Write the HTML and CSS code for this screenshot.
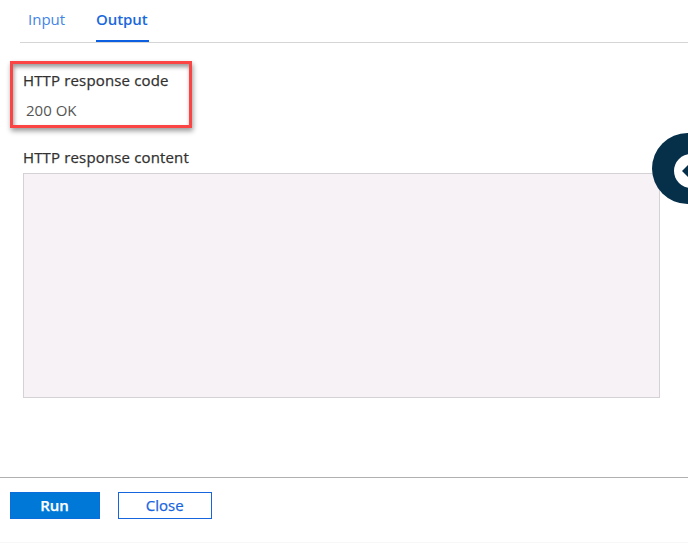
FILE: index.html
```html
<!DOCTYPE html>
<html lang="en">
<head>
<meta charset="utf-8">
<title>Test run</title>
<link rel="stylesheet" href="styles.css">
</head>
<body>
<div class="panel">
  <nav class="tabs">
    <a class="tab">Input</a>
    <a class="tab active">Output</a>
  </nav>
  <main class="content">
    <section class="response-code">
      <h2 class="label">HTTP response code</h2>
      <p class="value">200 OK</p>
    </section>
    <section class="response-body">
      <h2 class="label">HTTP response content</h2>
      <div class="output"></div>
    </section>
  </main>
  <footer class="actions">
    <button class="button primary">Run</button>
    <button class="button">Close</button>
  </footer>
  <svg class="collapse" viewBox="0 0 36 72" width="36" height="72">
    <circle cx="35.5" cy="35.5" r="35.5" fill="#062f49"/>
    <circle cx="39" cy="38" r="17" fill="#fff"/>
    <path d="M30 38 L40 28 V48 Z" fill="#062f49"/>
  </svg>
</div>
</body>
</html>
```

FILE: styles.css
```css
* { box-sizing: border-box; }
body {
  margin: 0;
  background: #fff;
  color: #323130;
  font-family: "Open Sans", "Noto Sans", sans-serif;
  font-size: 15px;
}
.panel {
  position: relative;
  width: 688px;
  height: 543px;
  overflow: hidden;
  display: flex;
  flex-direction: column;
  border-bottom: 1px solid #f7f7f7;
}
.tabs {
  display: flex;
  gap: 30px;
  height: 43px;
  margin-left: 20px;
  padding-left: 8px;
  border-bottom: 1px solid #d5d5d5;
}
.tab {
  height: 42px;
  padding-top: 8px;
  line-height: 22px;
  color: #3f84e6;
  width: 38px;
  white-space: nowrap;
}
.tab.active {
  width: 53px;
  color: #1a68dc;
  font-weight: 600;
  letter-spacing: -0.1px;
  border-bottom: 2px solid #0b5fe0;
}
.content {
  flex: 1;
  padding: 18px 28px 0 10px;
}
.response-code {
  width: 182px;
  height: 67px;
  padding: 5px 0 0 10px;
  border: 3px solid #fb4544;
  box-shadow: 1px 3px 5px rgba(0, 0, 0, .4), inset 1px 3px 4px rgba(0, 0, 0, .4);
}
.label {
  margin: 0;
  font-size: 15px;
  font-weight: 500;
  line-height: 22px;
  letter-spacing: 0.15px;
  -webkit-text-stroke: 0.25px currentColor;
  white-space: nowrap;
}
.value {
  margin: 8px 0 0 3px;
  line-height: 22px;
  color: #555;
}
.response-body {
  margin: 18px 0 0 13px;
}
.output {
  height: 225px;
  margin-top: 5px;
  background: #f7f2f6;
  border: 1px solid #d4d2d4;
}
.actions {
  display: flex;
  gap: 18px;
  height: 65px;
  padding: 14px 0 0 9.5px;
  border-top: 1px solid #b0b0b0;
}
.button {
  width: 94.5px;
  height: 27px;
  padding: 0;
  background: #fff;
  border: 1px solid #1764df;
  color: #1764df;
  font: 500 15px/23px "Open Sans", "Noto Sans", sans-serif;
  -webkit-text-stroke: 0.25px currentColor;
}
.button.primary {
  width: 90px;
  background: #0078d7;
  border-color: #0b6cdc;
  color: #fff;
  font-weight: 600;
}
.collapse {
  position: absolute;
  left: 652px;
  top: 133px;
}
```
